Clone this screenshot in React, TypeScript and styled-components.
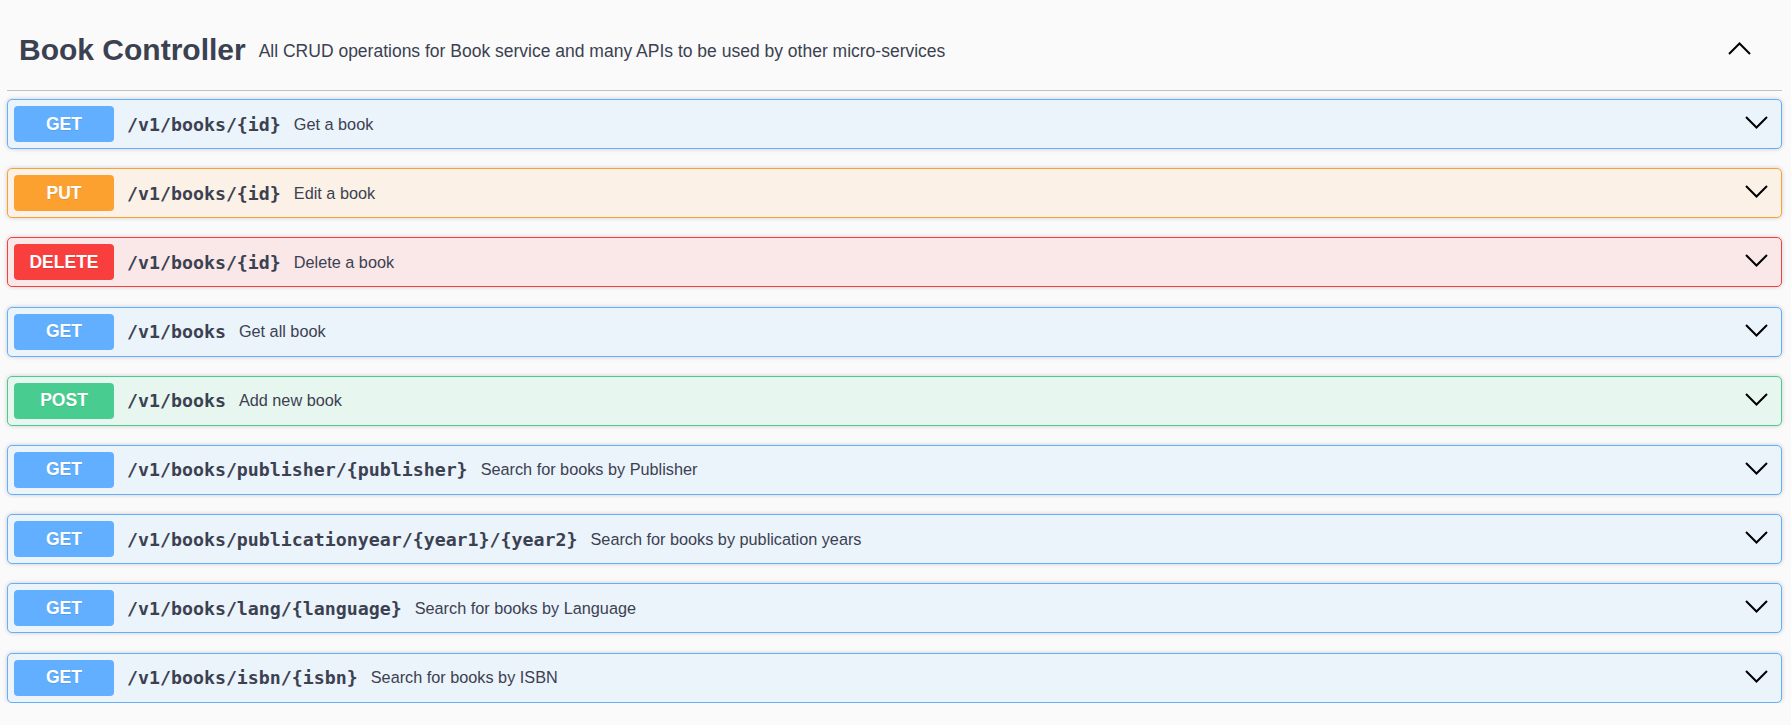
import React from "react";
import styled, {createGlobalStyle} from "styled-components";

const GlobalStyle = createGlobalStyle`
  html, body {
    margin: 0;
    padding: 0;
    background: #fafafa;
    font-family: "Liberation Sans", Arial, sans-serif;
    color: #3b4151;
  }
`

type Method = "GET" | "PUT" | "DELETE" | "POST"

const COLORS: Record<Method, string> = {
    GET: "#61affe",
    PUT: "#fca130",
    DELETE: "#f93e3e",
    POST: "#49cc90",
}

const BG: Record<Method, string> = {
    GET: "#ebf3fb",
    PUT: "#fbf1e6",
    DELETE: "#fae7e7",
    POST: "#e8f6f0",
}

const Page = styled.div`
  padding: 10px 9px 0 7px;
`

const TagHeader = styled.div`
  display: flex;
  align-items: center;
  height: 80px;
  border-bottom: 1px solid rgba(59, 65, 81, 0.3);
  padding: 0 31px 0 12px;
  margin-bottom: 8px;
`

const TagTitle = styled.h3`
  margin: 0;
  font-size: 30px;
  font-weight: 700;
  color: #3b4151;
`

const TagDescription = styled.small`
  flex: 1;
  font-size: 17.5px;
  padding: 0 13px;
  margin-top: 2px;
`

const OpList = styled.div`
  display: flex;
  flex-direction: column;
  gap: 19.2px;
`

const OpBlock = styled.div<{ $method: Method }>`
  display: flex;
  align-items: center;
  height: 48px;
  padding: 0 13px 0 6px;
  border: 1px solid ${p => COLORS[p.$method]};
  background: ${p => BG[p.$method]};
  border-radius: 5px;
  box-shadow: 0 0 4px rgba(0, 0, 0, 0.19);
`

const MethodBadge = styled.span<{ $method: Method }>`
  display: flex;
  align-items: center;
  justify-content: center;
  width: 100px;
  height: 36px;
  border-radius: 4px;
  background: ${p => COLORS[p.$method]};
  color: #fff;
  font-size: 17.5px;
  font-weight: 700;
  text-shadow: 0 1px 0 rgba(0, 0, 0, 0.1);
`

const Path = styled.span`
  padding: 0 13px;
  font-family: "DejaVu Sans Mono", "Liberation Mono", monospace;
  font-size: 18.25px;
  font-weight: 700;
  color: #3b4151;
`

const Summary = styled.span`
  flex: 1;
  font-size: 16.25px;
  color: #3b4151;
`

const Chevron = styled.svg`
  flex: none;
  margin-bottom: 3px;
`

function Arrow({up}: { up?: boolean }) {
    return <Chevron width="23" height="13" viewBox="0 0 23 13">
        <polyline
            points={up ? "1,12 11.5,1.5 22,12" : "1,1 11.5,11.5 22,1"}
            fill="none" stroke="#000" strokeWidth="2"/>
    </Chevron>
}

const operations: { method: Method, path: string, summary: string }[] = [
    {method: "GET", path: "/v1/books/{id}", summary: "Get a book"},
    {method: "PUT", path: "/v1/books/{id}", summary: "Edit a book"},
    {method: "DELETE", path: "/v1/books/{id}", summary: "Delete a book"},
    {method: "GET", path: "/v1/books", summary: "Get all book"},
    {method: "POST", path: "/v1/books", summary: "Add new book"},
    {method: "GET", path: "/v1/books/publisher/{publisher}", summary: "Search for books by Publisher"},
    {method: "GET", path: "/v1/books/publicationyear/{year1}/{year2}", summary: "Search for books by publication years"},
    {method: "GET", path: "/v1/books/lang/{language}", summary: "Search for books by Language"},
    {method: "GET", path: "/v1/books/isbn/{isbn}", summary: "Search for books by ISBN"},
]

export default function App() {
    return <>
        <GlobalStyle/>
        <Page>
            <TagHeader>
                <TagTitle>Book Controller</TagTitle>
                <TagDescription>All CRUD operations for Book service and many APIs to be used by other micro-services</TagDescription>
                <Arrow up/>
            </TagHeader>
            <OpList>
                {operations.map((op, i) =>
                    <OpBlock key={i} $method={op.method}>
                        <MethodBadge $method={op.method}>{op.method}</MethodBadge>
                        <Path>{op.path}</Path>
                        <Summary>{op.summary}</Summary>
                        <Arrow/>
                    </OpBlock>
                )}
            </OpList>
        </Page>
    </>
}
